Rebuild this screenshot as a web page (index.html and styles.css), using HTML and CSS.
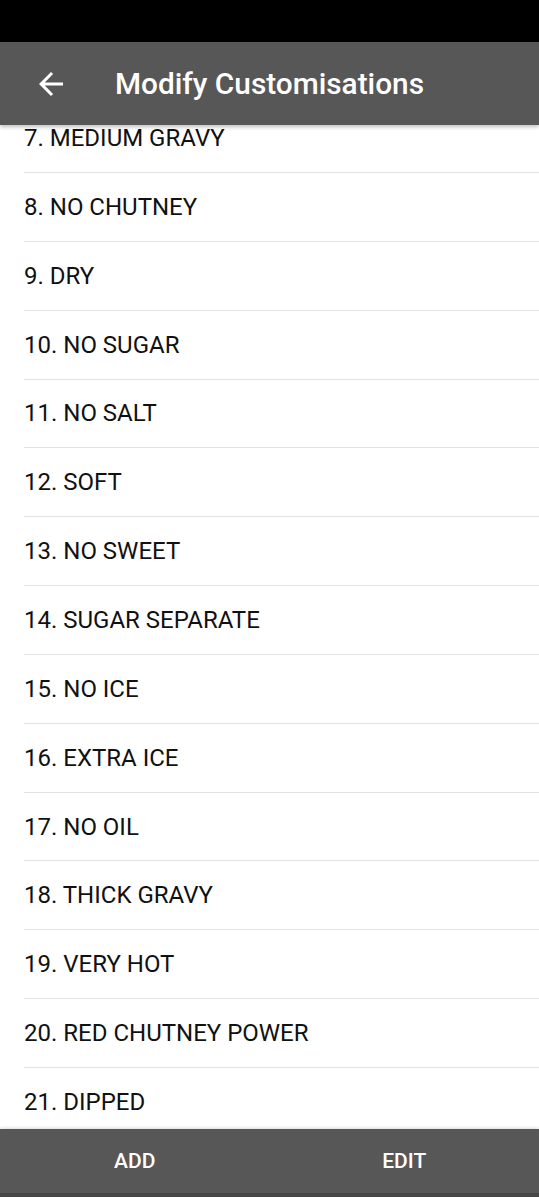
FILE: index.html
```html
<!DOCTYPE html>
<html lang="en">
<head>
<meta charset="utf-8">
<title>Modify Customisations</title>
<link rel="stylesheet" href="styles.css">
</head>
<body>
<div class="screen">
  <div class="status-bar"></div>
  <header class="toolbar">
    <button class="back" aria-label="Back">
      <svg viewBox="0 0 24 24" width="36" height="36"><path d="M20 11H7.83l5.59-5.59L12 4l-8 8 8 8 1.41-1.41L7.83 13H20v-2z" fill="#fff"/></svg>
    </button>
    <h1 class="title">Modify Customisations</h1>
  </header>
  <main class="content">
    <ul class="list">
      <li class="item">7. MEDIUM GRAVY</li>
      <li class="item">8. NO CHUTNEY</li>
      <li class="item">9. DRY</li>
      <li class="item">10. NO SUGAR</li>
      <li class="item">11. NO SALT</li>
      <li class="item">12. SOFT</li>
      <li class="item">13. NO SWEET</li>
      <li class="item">14. SUGAR SEPARATE</li>
      <li class="item">15. NO ICE</li>
      <li class="item">16. EXTRA ICE</li>
      <li class="item">17. NO OIL</li>
      <li class="item">18. THICK GRAVY</li>
      <li class="item">19. VERY HOT</li>
      <li class="item">20. RED CHUTNEY POWER</li>
      <li class="item">21. DIPPED</li>
    </ul>
  </main>
  <footer class="actions">
    <button class="action">ADD</button>
    <button class="action">EDIT</button>
  </footer>
  <div class="nav-strip"></div>
</div>
</body>
</html>
```
FILE: styles.css
```css
html, body {
  margin: 0;
  padding: 0;
  background: #ffffff;
}
body {
  font-family: Roboto, "Liberation Sans", Arial, sans-serif;
}
.screen {
  width: 539px;
  height: 1197px;
  display: flex;
  flex-direction: column;
  overflow: hidden;
}
.status-bar {
  height: 42px;
  background: #000000;
  flex: none;
}
.toolbar {
  height: 83px;
  flex: none;
  background: #575757;
  display: flex;
  align-items: center;
  position: relative;
  z-index: 2;
  box-shadow: 0 2px 4px rgba(0,0,0,0.25);
}
.back {
  width: 36px;
  height: 36px;
  margin-left: 33px;
  padding: 0;
  border: 0;
  background: none;
  display: flex;
  align-items: center;
  justify-content: center;
}
.back svg {
  display: block;
}
.title {
  margin: 0 0 0 46px;
  color: #ffffff;
  font-size: 29.8px;
  font-weight: 500;
  letter-spacing: 0;
}
.content {
  flex: 1;
  overflow: hidden;
  min-height: 0;
}
.list {
  list-style: none;
  margin: -20.85px 0 0 0;
  padding: 0;
}
.item {
  box-sizing: border-box;
  height: 68.85px;
  margin-left: 24px;
  border-bottom: 1.5px solid #e2e2e2;
  display: flex;
  align-items: center;
  font-size: 24px;
  color: #111111;
}
.actions {
  height: 64px;
  flex: none;
  background: #575757;
  display: grid;
  grid-template-columns: 1fr 1fr;
  box-shadow: 0 -1px 3px rgba(0,0,0,0.15);
  position: relative;
  z-index: 2;
}
.action {
  border: 0;
  background: none;
  color: #ffffff;
  font-family: Roboto, "Liberation Sans", Arial, sans-serif;
  font-size: 21px;
  font-weight: 500;
  padding: 0;
}
.nav-strip {
  height: 4px;
  flex: none;
  background: #474747;
}
```
